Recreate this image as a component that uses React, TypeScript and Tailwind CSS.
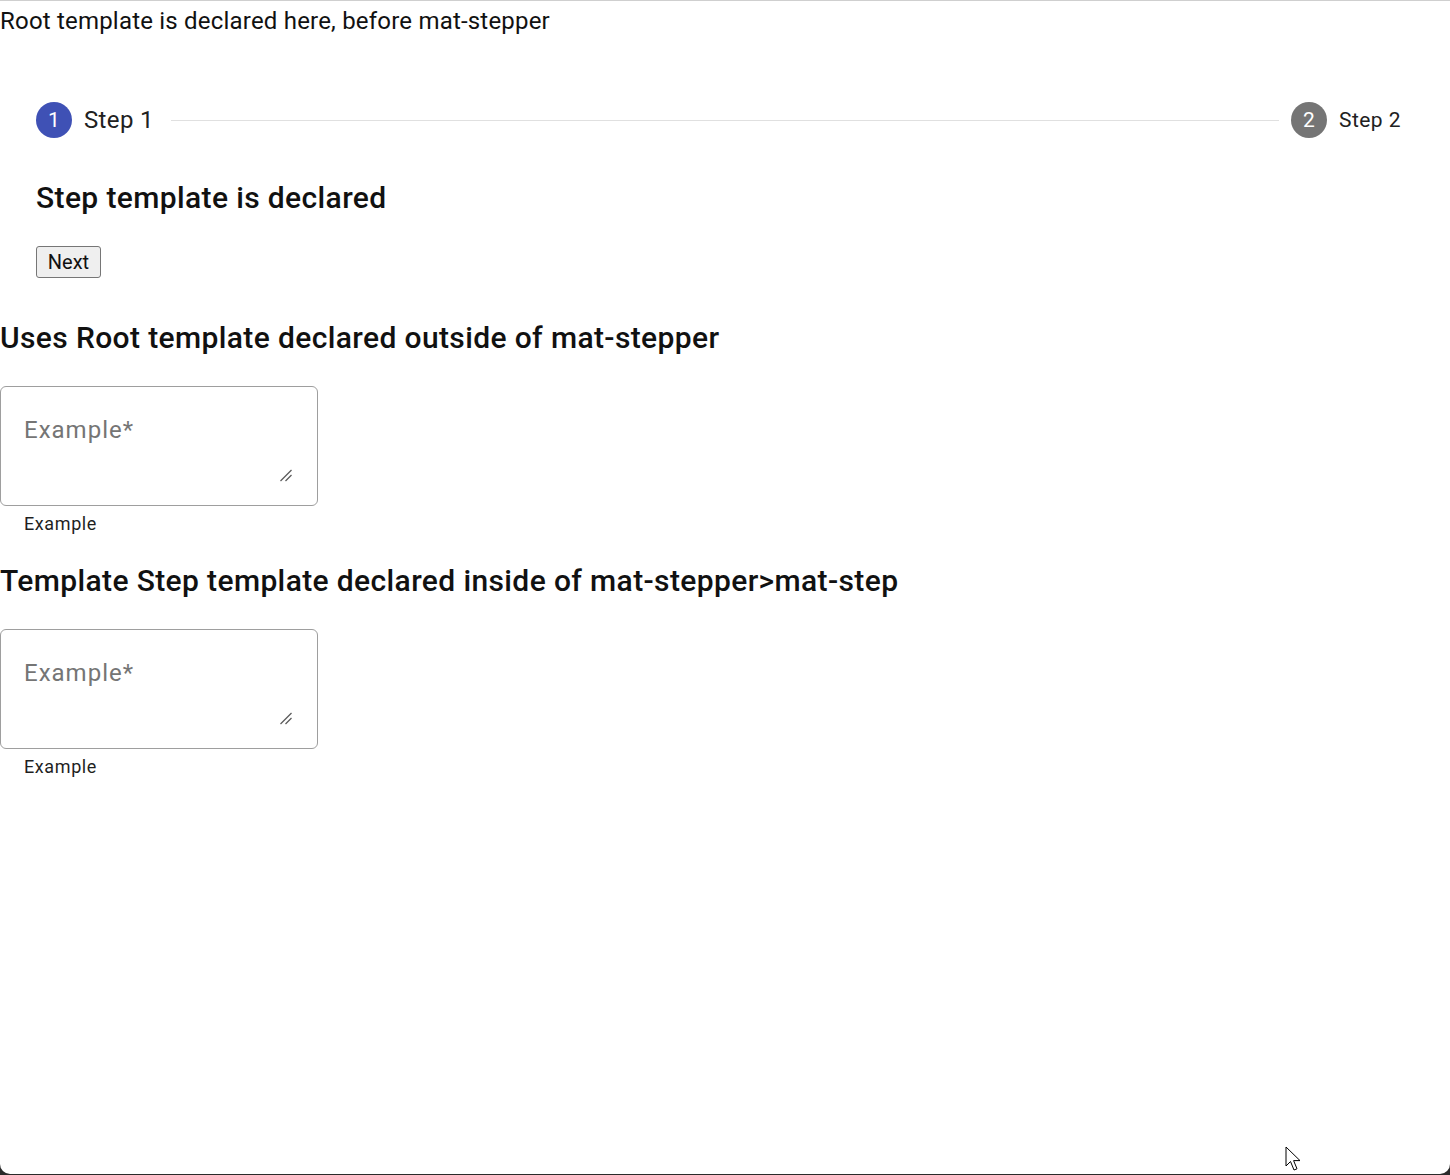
import React from "react";

function ResizeHandle() {
  return (
    <svg
      className="absolute right-[24px] bottom-[23px]"
      width="14"
      height="14"
      viewBox="0 0 14 14"
    >
      <line x1="1.5" y1="13" x2="12.5" y2="2" stroke="#5a5a5a" strokeWidth="1.3" />
      <line x1="6.5" y1="13" x2="12.5" y2="7" stroke="#5a5a5a" strokeWidth="1.3" />
    </svg>
  );
}

function TextareaField() {
  return (
    <div>
      <div className="relative box-border w-[318px] h-[120px] border border-[#9e9e9e] rounded-[6px] pl-[23px] pt-[25px]">
        <div className="text-[24px] leading-[36px] tracking-[1px] text-[#757575]">Example*</div>
        <ResizeHandle />
      </div>
      <div className="h-[51px] pl-[24px] pt-[4px] text-[18px] leading-[27px] tracking-[0.6px] text-[#1f1f1f]">
        Example
      </div>
    </div>
  );
}

function Cursor() {
  return (
    <svg
      className="absolute left-[1285px] top-[1146px]"
      width="20"
      height="28"
      viewBox="0 0 20 28"
    >
      <path
        d="M1 1 L1 20 L5.5 15.5 L9 24 L12 22.8 L8.6 14.6 L15 14.6 Z"
        fill="#ffffff"
        stroke="#000000"
        strokeWidth="1"
        strokeLinejoin="round"
      />
    </svg>
  );
}

export default function App() {
  return (
    <div className="relative w-[1450px] h-[1175px] bg-[#2a2a2a] overflow-hidden" style={{ fontFamily: "Roboto, 'Noto Sans', sans-serif" }}>
      <div className="h-[1174px] bg-white border-t border-[#cfcfcf] rounded-b-[10px] text-[#1f1f1f]">
        <div className="text-[24px] leading-[41px] tracking-[0.2px] text-[#111]">Root template is declared here, before mat-stepper</div>

        <div className="mt-[24px] h-[108px] flex items-center pl-[36px] pr-[49px]">
          <div className="w-[36px] h-[36px] rounded-full bg-[#3f51b5] text-white flex items-center justify-center text-[21px] leading-none pt-px">
            1
          </div>
          <div className="ml-[12px] text-[24px] tracking-[0.35px] text-[#212121]">Step 1</div>
          <div className="flex-1 h-px bg-[#e0e0e0] ml-[17px] mr-[12px]" />
          <div className="w-[36px] h-[36px] rounded-full bg-[#757575] text-white flex items-center justify-center text-[21px] leading-none pt-px">
            2
          </div>
          <div className="ml-[12px] text-[21px] tracking-[0.45px] text-[#212121] pt-px">Step 2</div>
        </div>

        <div className="px-[36px] pb-[36px]">
          <h2 className="text-[30px] leading-[48px] tracking-[0.375px] font-medium text-[#111] mb-[24px]">Step template is declared</h2>
          <button className="box-border w-[65px] h-[32px] bg-[#efefef] border border-[#767676] rounded-[3px] text-[20px] leading-none text-[#111]">
            Next
          </button>
        </div>

        <h2 className="text-[30px] leading-[48px] tracking-[0.375px] font-medium text-[#111] mb-[24px]">
          Uses Root template declared outside of mat-stepper
        </h2>
        <TextareaField />

        <h2 className="text-[30px] leading-[48px] tracking-[0.375px] font-medium text-[#111] mb-[24px]">
          Template Step template declared inside of mat-stepper&gt;mat-step
        </h2>
        <TextareaField />
      </div>
      <Cursor />
    </div>
  );
}
